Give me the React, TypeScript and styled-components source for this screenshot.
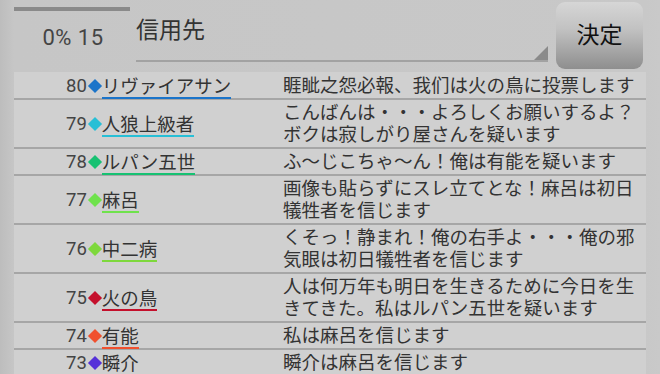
import React from "react";
import styled, { createGlobalStyle } from "styled-components";

const Global = createGlobalStyle`
  html, body { margin: 0; padding: 0; }
  body {
    width: 660px; height: 374px; overflow: hidden;
    background: #c6c6c6;
    font-family: Roboto, "Noto Sans CJK JP", "Noto Sans", sans-serif;
  }
`;

const Page = styled.div`
  width: 660px;
  height: 374px;
  overflow: hidden;
  display: flex;
  flex-direction: column;
  background: linear-gradient(90deg, #bdbdbd 0px, #c6c6c6 14px, #c8c8c8 646px, #c9c9c9 660px);
`;

const Header = styled.div`
  height: 72px;
  flex: none;
  display: flex;
  align-items: stretch;
  padding-left: 14px;
`;

const Status = styled.div`
  width: 116px;
  display: flex;
  flex-direction: column;
  align-items: center;
  padding-top: 7px;
`;

const Progress = styled.div`
  width: 116px;
  height: 4px;
  background: #8a8a8a;
`;

const Percent = styled.div`
  margin-top: 13px;
  font-size: 22px;
  line-height: 28px;
  color: #444;
  letter-spacing: 0.5px;
  padding-left: 2px;
`;

const Spinner = styled.div`
  position: relative;
  flex: 1;
  margin-left: 6px;
  margin-right: 8px;
  height: 62px;
  border-bottom: 2px solid #a2a2a2;
  box-sizing: border-box;
  font-size: 23px;
  color: #333;
  padding-top: 16px;
  line-height: 30px;
  &::after {
    content: "";
    position: absolute;
    right: 0;
    bottom: 0;
    width: 0;
    height: 0;
    border-left: 14px solid transparent;
    border-bottom: 14px solid #8a8a8a;
  }
`;

const Decide = styled.button`
  width: 87px;
  height: 67px;
  margin-top: 2px;
  margin-right: 17px;
  border: none;
  border-radius: 9px;
  background: linear-gradient(180deg, #d6d6d6 0%, #c2c2c2 40%, #8e8e8e 100%);
  color: #111;
  font-family: "Noto Sans CJK JP", sans-serif;
  font-size: 23px;
  padding: 0 0 6px 0;
  flex: none;
`;

const List = styled.div`
  margin: 0 14px;
  background: #d0d0d0;
  flex: 1;
  padding-top: 1px;
`;

const Row = styled.div`
  display: grid;
  grid-template-columns: 269px 1fr;
  border-bottom: 2px solid #a6a6a6;
  padding: 1.5px 0 1.5px;
  font-size: 18.5px;
  line-height: 22px;
  color: #333;
`;

const Who = styled.div`
  display: flex;
  align-items: center;
  padding-left: 52px;
`;

const Num = styled.span`
  color: #444;
  font-size: 18.5px;
`;

const Diamond = styled.span<{ $c: string }>`
  width: 10px;
  height: 10px;
  margin: 0 2px 0 3px;
  background: ${(p) => p.$c};
  transform: rotate(45deg);
  flex: none;
`;

const Name = styled.span<{ $c: string }>`
  display: inline-block;
  border-bottom: 2px solid ${(p) => p.$c};
  line-height: 20px;
  margin-top: 2px;
  margin-bottom: -2px;
  color: #333;
`;

const Msg = styled.div`
  color: #333;
  padding-right: 4px;
  word-break: break-all;
`;

const rows = [
  { n: 80, c: "#1b74c9", name: "リヴァイアサン", msg: "睚眦之怨必報、我们は火の鳥に投票します" },
  { n: 79, c: "#27bfd6", name: "人狼上級者", msg: "こんばんは・・・よろしくお願いするよ？ボクは寂しがり屋さんを疑います" },
  { n: 78, c: "#17c172", name: "ルパン五世", msg: "ふ～じこちゃ～ん！俺は有能を疑います" },
  { n: 77, c: "#6fe24c", name: "麻呂", msg: "画像も貼らずにスレ立てとな！麻呂は初日犠牲者を信じます" },
  { n: 76, c: "#7ed83c", name: "中二病", msg: "くそっ！静まれ！俺の右手よ・・・俺の邪気眼は初日犠牲者を信じます" },
  { n: 75, c: "#c4102c", name: "火の鳥", msg: "人は何万年も明日を生きるために今日を生きてきた。私はルパン五世を疑います" },
  { n: 74, c: "#f0502e", name: "有能", msg: "私は麻呂を信じます" },
  { n: 73, c: "#5531d8", name: "瞬介", msg: "瞬介は麻呂を信じます" },
];

export default function App() {
  return (
    <>
      <Global />
      <Page>
        <Header>
          <Status>
            <Progress />
            <Percent>0% 15</Percent>
          </Status>
          <Spinner>信用先</Spinner>
          <Decide>決定</Decide>
        </Header>
        <List>
          {rows.map((r) => (
            <Row key={r.n}>
              <Who>
                <Num>{r.n}</Num>
                <Diamond $c={r.c} />
                <Name $c={r.c}>{r.name}</Name>
              </Who>
              <Msg>{r.msg}</Msg>
            </Row>
          ))}
        </List>
      </Page>
    </>
  );
}
